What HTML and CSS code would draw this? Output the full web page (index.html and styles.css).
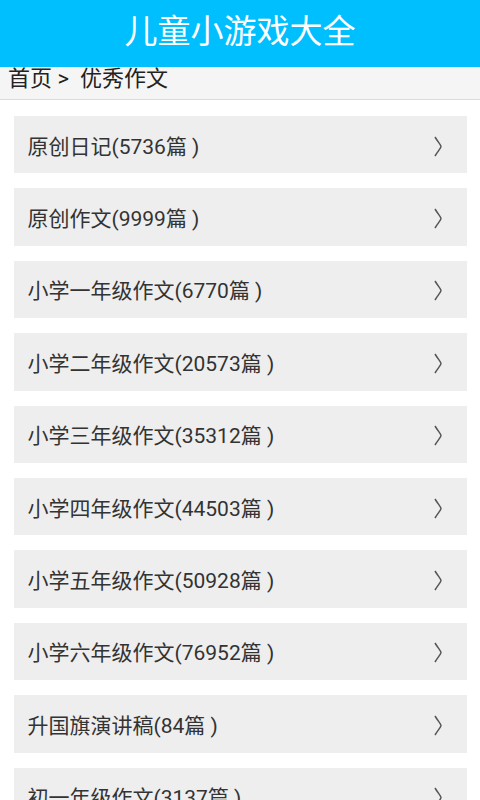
FILE: index.html
```html
<html>
<head>
	<meta charset="utf-8">
	<title>儿童小游戏大全</title>
	<link rel="stylesheet" href="styles.css">
</head>
<body>
	<div class="titleBar">儿童小游戏大全</div>
	<div class="crumbs">首页 &gt;&nbsp; 优秀作文</div>
	<div class="catList">
		<div class="catItem"><span>原创日记(5736篇 )</span><svg class="arrow" width="10" height="21" viewBox="0 0 10 21"><path d="M2 1 C5 6 8 9 8 10.5 C8 12 5 15 2 20"/></svg></div>
		<div class="catItem"><span>原创作文(9999篇 )</span><svg class="arrow" width="10" height="21" viewBox="0 0 10 21"><path d="M2 1 C5 6 8 9 8 10.5 C8 12 5 15 2 20"/></svg></div>
		<div class="catItem"><span>小学一年级作文(6770篇 )</span><svg class="arrow" width="10" height="21" viewBox="0 0 10 21"><path d="M2 1 C5 6 8 9 8 10.5 C8 12 5 15 2 20"/></svg></div>
		<div class="catItem"><span>小学二年级作文(20573篇 )</span><svg class="arrow" width="10" height="21" viewBox="0 0 10 21"><path d="M2 1 C5 6 8 9 8 10.5 C8 12 5 15 2 20"/></svg></div>
		<div class="catItem"><span>小学三年级作文(35312篇 )</span><svg class="arrow" width="10" height="21" viewBox="0 0 10 21"><path d="M2 1 C5 6 8 9 8 10.5 C8 12 5 15 2 20"/></svg></div>
		<div class="catItem"><span>小学四年级作文(44503篇 )</span><svg class="arrow" width="10" height="21" viewBox="0 0 10 21"><path d="M2 1 C5 6 8 9 8 10.5 C8 12 5 15 2 20"/></svg></div>
		<div class="catItem"><span>小学五年级作文(50928篇 )</span><svg class="arrow" width="10" height="21" viewBox="0 0 10 21"><path d="M2 1 C5 6 8 9 8 10.5 C8 12 5 15 2 20"/></svg></div>
		<div class="catItem"><span>小学六年级作文(76952篇 )</span><svg class="arrow" width="10" height="21" viewBox="0 0 10 21"><path d="M2 1 C5 6 8 9 8 10.5 C8 12 5 15 2 20"/></svg></div>
		<div class="catItem"><span>升国旗演讲稿(84篇 )</span><svg class="arrow" width="10" height="21" viewBox="0 0 10 21"><path d="M2 1 C5 6 8 9 8 10.5 C8 12 5 15 2 20"/></svg></div>
		<div class="catItem"><span>初一年级作文(3137篇 )</span><svg class="arrow" width="10" height="21" viewBox="0 0 10 21"><path d="M2 1 C5 6 8 9 8 10.5 C8 12 5 15 2 20"/></svg></div>
	</div>
</body>
</html>
```

FILE: styles.css
```css
body {
	margin: 0;
	background-color: #ffffff;
	font-family: Roboto, "Noto Sans CJK SC", sans-serif;
	color: #333333;
	overflow: hidden;
}
.titleBar {
	height: 67px;
	background-color: #00bfff;
	color: #ffffff;
	font-size: 33px;
	display: flex;
	align-items: center;
	justify-content: center;
	padding-bottom: 10px;
	box-sizing: border-box;
}
.crumbs {
	height: 33px;
	background-color: #f5f5f5;
	border-bottom: 1px solid #dcdcdc;
	font-size: 22px;
	line-height: 24px;
	padding-left: 8px;
	color: #222222;
	box-sizing: border-box;
}
.catList {
	padding: 16px 13.5px 0 13.5px;
}
.catItem {
	height: 57.4px;
	margin-bottom: 15px;
	background-color: #eeeeee;
	display: flex;
	align-items: center;
	justify-content: space-between;
	padding: 0 24px 0 14px;
	box-sizing: border-box;
	font-size: 21px;
}
.arrow {
	fill: none;
	stroke: #555555;
	stroke-width: 1.5;
	margin-top: 3px;
}
```
